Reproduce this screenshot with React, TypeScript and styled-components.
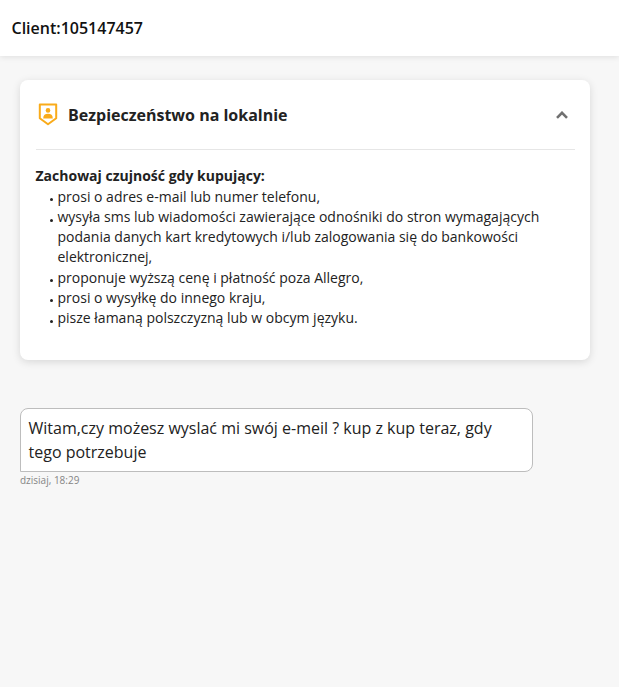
import React from 'react';
import styled, {createGlobalStyle} from 'styled-components';

const GlobalStyle = createGlobalStyle`
  html, body {
    margin: 0;
    padding: 0;
    background: #f7f7f7;
    font-family: "Open Sans", "Liberation Sans", sans-serif;
    color: #222;
  }
`;

const warnings = [
  'prosi o adres e-mail lub numer telefonu,',
  'wysyła sms lub wiadomości zawierające odnośniki do stron wymagających podania danych kart kredytowych i/lub zalogowania się do bankowości elektronicznej,',
  'proponuje wyższą cenę i płatność poza Allegro,',
  'prosi o wysyłkę do innego kraju,',
  'pisze łamaną polszczyzną lub w obcym języku.',
];

const ShieldIcon = () => (
  <svg width="20" height="24" viewBox="0 0 20 24" fill="none">
    <path
      d="M1.8 1.6h16.4v13.6L10 21.2 1.8 15.2z"
      stroke="#f9ab1a"
      strokeWidth="2"
      strokeLinejoin="round"
    />
    <circle cx="10" cy="7.4" r="2.3" fill="#f9ab1a" />
    <path d="M5.2 15.4c0-3.2 1.8-4.6 4.8-4.6s4.8 1.4 4.8 4.6z" fill="#f9ab1a" />
  </svg>
);

const ChevronIcon = () => (
  <svg width="12" height="8" viewBox="0 0 12 8" fill="none">
    <path d="M1 6.8l5-5 5 5" stroke="#707070" strokeWidth="2.6" />
  </svg>
);

export default function App() {
  return (
    <Page>
      <GlobalStyle />
      <Header>Client:105147457</Header>
      <Content>
        <Card>
          <CardHeader>
            <CardTitle>
              <ShieldIcon />
              <Title>Bezpieczeństwo na lokalnie</Title>
            </CardTitle>
            <ChevronIcon />
          </CardHeader>
          <CardBody>
            <Lead>Zachowaj czujność gdy kupujący:</Lead>
            <List>
              {warnings.map(text => (
                <Item key={text}>{text}</Item>
              ))}
            </List>
          </CardBody>
        </Card>
        <Message>
          <Bubble>Witam,czy możesz wyslać mi swój e-meil ? kup z kup teraz, gdy tego potrzebuje</Bubble>
          <Time>dzisiaj, 18:29</Time>
        </Message>
      </Content>
    </Page>
  );
}

const Page = styled.div`
  min-height: 687px;
  background: #f7f7f7;
  overflow: hidden;
`;

const Header = styled.header`
  height: 56px;
  padding-left: 11.5px;
  display: flex;
  align-items: center;
  background: #fff;
  box-shadow: 0 1px 6px rgba(0, 0, 0, 0.1);
  font-size: 16px;
  font-weight: 600;
  color: #111;
`;

const Content = styled.main`
  padding: 24px 29px 0 20px;
`;

const Card = styled.section`
  height: 280px;
  box-sizing: border-box;
  padding: 0 15px 0 16px;
  background: #fff;
  border-radius: 8px;
  box-shadow: 0 2px 8px rgba(0, 0, 0, 0.13);
`;

const CardHeader = styled.div`
  height: 69px;
  display: flex;
  align-items: center;
  justify-content: space-between;
  padding-right: 7px;
  border-bottom: 1px solid #e6e6e6;
`;

const CardTitle = styled.div`
  display: flex;
  align-items: center;
  gap: 10px;
  padding-left: 2px;
`;

const Title = styled.h2`
  margin: 0;
  font-size: 16px;
  font-weight: 700;
  color: #222;
`;

const CardBody = styled.div`
  margin-left: -0.5px;
  padding-top: 16px;
  font-size: 14px;
  line-height: 20.2px;
`;

const Lead = styled.div`
  font-weight: 700;
  margin-bottom: 0.6px;
`;

const List = styled.ul`
  margin: 0;
  padding: 0 0 0 22px;
  list-style: none;
`;

const Item = styled.li`
  position: relative;

  &::before {
    content: '';
    position: absolute;
    left: -7.5px;
    top: 11.5px;
    width: 3px;
    height: 3px;
    border-radius: 50%;
    background: #222;
  }
`;

const Message = styled.div`
  margin-top: 48px;
  width: 513px;
`;

const Bubble = styled.div`
  box-sizing: border-box;
  height: 64px;
  padding: 7px 8px 0 7.5px;
  background: #fff;
  border: 1px solid #bdbdbd;
  border-radius: 8px 8px 8px 0;
  font-size: 16px;
  line-height: 24px;
  color: #222;
`;

const Time = styled.div`
  margin-top: 1px;
  font-size: 10px;
  line-height: 14px;
  color: #858585;
`;
